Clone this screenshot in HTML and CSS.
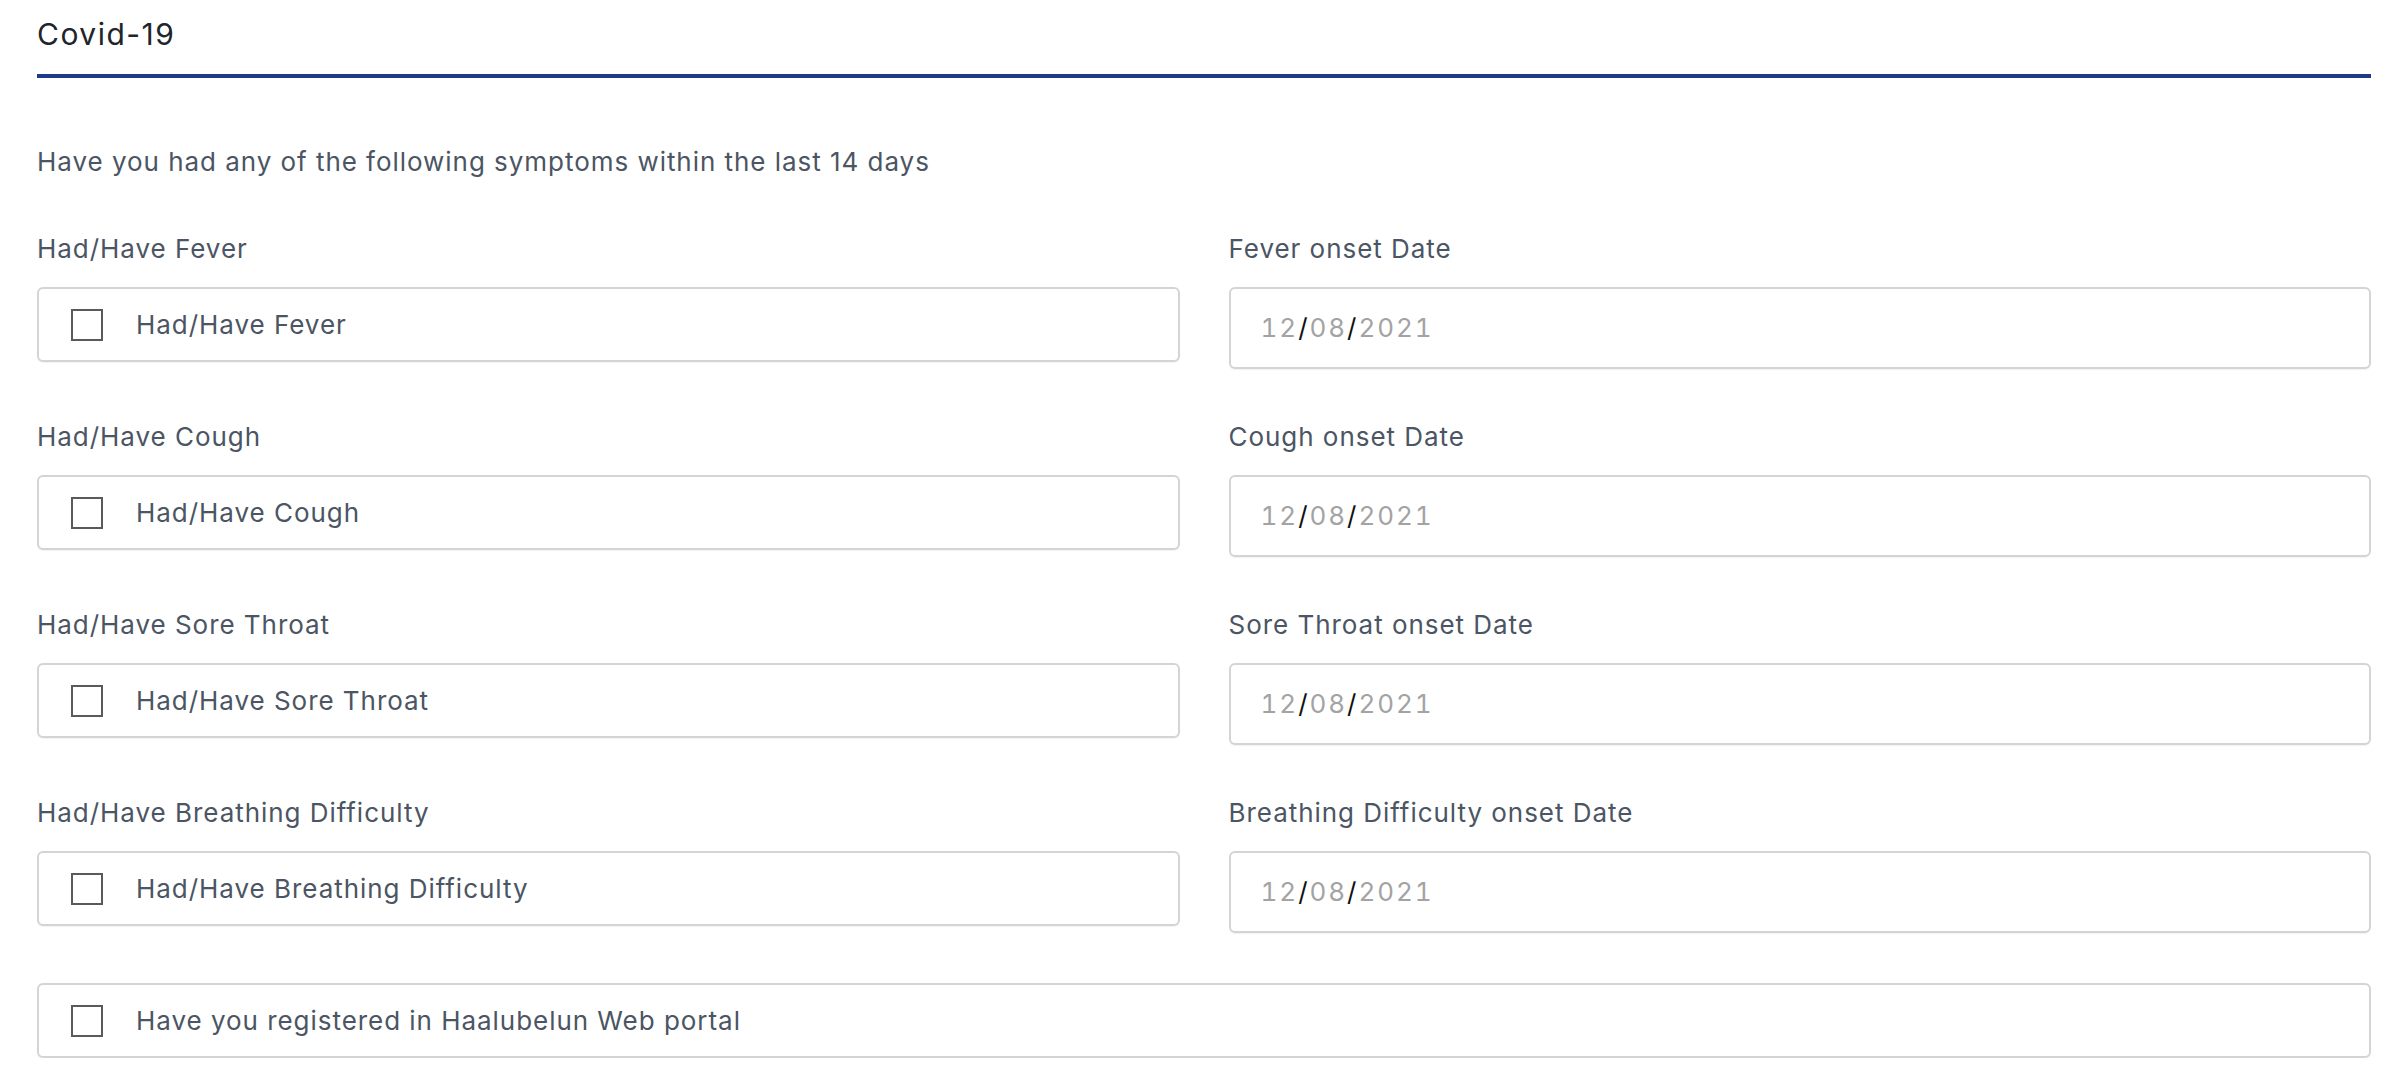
FILE: index.html
```html
<!DOCTYPE html>
<html lang="en">
<head>
<meta charset="utf-8">
<title>Covid-19</title>
<link rel="stylesheet" href="styles.css">
</head>
<body>
<div class="page">
  <h1 class="title">Covid-19</h1>
  <p class="intro">Have you had any of the following symptoms within the last 14 days</p>
  <div class="grid">
    <div class="field">
      <div class="label">Had/Have Fever</div>
      <div class="check-box"><span class="check"></span><span class="check-text">Had/Have Fever</span></div>
    </div>
    <div class="field">
      <div class="label">Fever onset Date</div>
      <div class="date-box"><span class="d">12</span><span class="s">/</span><span class="d">08</span><span class="s">/</span><span class="d">2021</span></div>
    </div>
    <div class="field">
      <div class="label">Had/Have Cough</div>
      <div class="check-box"><span class="check"></span><span class="check-text">Had/Have Cough</span></div>
    </div>
    <div class="field">
      <div class="label">Cough onset Date</div>
      <div class="date-box"><span class="d">12</span><span class="s">/</span><span class="d">08</span><span class="s">/</span><span class="d">2021</span></div>
    </div>
    <div class="field">
      <div class="label">Had/Have Sore Throat</div>
      <div class="check-box"><span class="check"></span><span class="check-text">Had/Have Sore Throat</span></div>
    </div>
    <div class="field">
      <div class="label">Sore Throat onset Date</div>
      <div class="date-box"><span class="d">12</span><span class="s">/</span><span class="d">08</span><span class="s">/</span><span class="d">2021</span></div>
    </div>
    <div class="field">
      <div class="label">Had/Have Breathing Difficulty</div>
      <div class="check-box"><span class="check"></span><span class="check-text">Had/Have Breathing Difficulty</span></div>
    </div>
    <div class="field">
      <div class="label">Breathing Difficulty onset Date</div>
      <div class="date-box"><span class="d">12</span><span class="s">/</span><span class="d">08</span><span class="s">/</span><span class="d">2021</span></div>
    </div>
  </div>
  <div class="check-box full"><span class="check"></span><span class="check-text">Have you registered in Haalubelun Web portal</span></div>
</div>
</body>
</html>
```
FILE: styles.css
```css
* { box-sizing: border-box; }
html, body { margin: 0; padding: 0; background: #ffffff; }
body {
  font-family: Inter, "Noto Sans", "Liberation Sans", sans-serif;
  color: #4b5563;
  letter-spacing: 0.06em;
}
.page {
  padding: 12px 23px 0 37px;
}
.title {
  margin: 0;
  font-size: 30px;
  line-height: 45px;
  font-weight: 400;
  letter-spacing: 0.05em;
  color: #212529;
  padding-bottom: 17px;
  border-bottom: 4px solid #1e3a8a;
}
.intro {
  margin: 66px 0 51px 0;
  font-size: 26px;
  line-height: 36px;
  color: #4b5563;
}
.grid {
  display: grid;
  grid-template-columns: 1fr 1fr;
  column-gap: 49px;
  row-gap: 50px;
  align-items: start;
}
.label {
  font-size: 26px;
  line-height: 36px;
  margin-bottom: 20px;
  color: #4b5563;
}
.check-box {
  height: 75px;
  border: 2px solid #d4d4d4;
  border-radius: 6px;
  display: flex;
  align-items: center;
  padding-left: 32px;
  box-shadow: 0 1px 1px rgba(0,0,0,0.05);
}
.check {
  width: 32px;
  height: 32px;
  border: 2px solid #5a5a5a;
  flex: none;
  margin-right: 33px;
}
.check-text {
  font-size: 26px;
  line-height: 36px;
  color: #4b5563;
}
.date-box {
  height: 82px;
  border: 2px solid #d4d4d4;
  border-radius: 6px;
  display: flex;
  align-items: center;
  padding-left: 30px;
  font-size: 26px;
  line-height: 36px;
  letter-spacing: 0.075em;
  font-variant-numeric: tabular-nums;
  box-shadow: 0 1px 1px rgba(0,0,0,0.05);
}
.date-box .d { color: #a3a3a3; }
.date-box .s { color: #111111; }
.full {
  margin-top: 50px;
}
```
